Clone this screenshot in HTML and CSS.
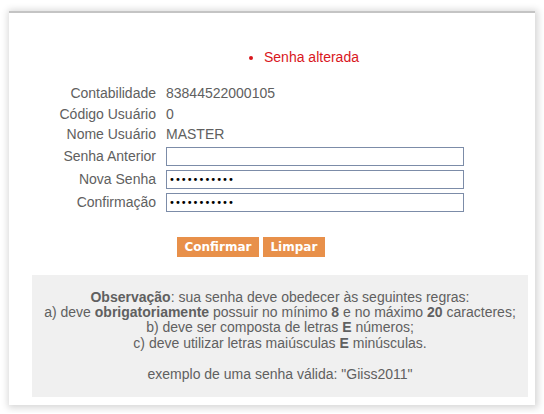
FILE: index.html
```html
<!DOCTYPE html>
<html lang="pt-BR">
<head>
  <meta charset="UTF-8">
  <title>Alterar Senha</title>
  <link rel="stylesheet" href="styles.css">
</head>
<body>
  <div class="panel">
    <ul class="msg">
      <li>Senha alterada</li>
    </ul>
    <div class="form">
      <span class="lbl">Contabilidade</span><span class="val">83844522000105</span>
      <span class="lbl">Código Usuário</span><span class="val">0</span>
      <span class="lbl">Nome Usuário</span><span class="val">MASTER</span>
      <span class="lbl in">Senha Anterior</span><input class="field" type="password" value="">
      <span class="lbl in">Nova Senha</span><input class="field" type="password" value="Giiss201112">
      <span class="lbl in">Confirmação</span><input class="field" type="password" value="Giiss201112">
    </div>
    <div class="buttons">
      <button class="btn">Confirmar</button>
      <button class="btn">Limpar</button>
    </div>
    <div class="obs">
      <b>Observação</b>: sua senha deve obedecer às seguintes regras:<br>
      a) deve <b>obrigatoriamente</b> possuir no mínimo <b>8</b> e no máximo <b>20</b> caracteres;<br>
      b) deve ser composta de letras <b>E</b> números;<br>
      c) deve utilizar letras maiúsculas <b>E</b> minúsculas.<br>
      <br>
      exemplo de uma senha válida: "Giiss2011"
    </div>
  </div>
</body>
</html>
```

FILE: styles.css
```css
body { margin: 0; padding: 11px 9px 8px 9px; background: #fff; font-family: "Liberation Sans", Arial, sans-serif; font-size: 14px; color: #606060; }
.panel { width: 526px; height: 394px; box-sizing: border-box; background: #fff; border-top: 2px solid #c4c4c4; box-shadow: 1px 1px 7px 2px rgba(0,0,0,0.16); }
.msg { margin: 0; padding: 36px 0 0 255px; color: #d9161c; list-style: disc; height: 34px; }
.msg li { line-height: 16px; }
.form { display: grid; grid-template-columns: 147px 298px; column-gap: 10px; align-items: center; }
.lbl { text-align: right; line-height: 20.5px; }
.val { line-height: 20.5px; }
.lbl.in { line-height: 23px; }
.field { width: 298px; height: 19px; box-sizing: border-box; margin: 0; padding: 0 2px; border: 1px solid #7c8ca8; font-size: 10px; font-family: "DejaVu Sans", Verdana, sans-serif; color: #000; }
.buttons { display: flex; gap: 4px; margin: 23px 0 0 168px; }
.btn { height: 20px; padding: 0 7.5px; border: none; background: #e8904a; color: #fff; font-family: "DejaVu Sans", Verdana, sans-serif; font-weight: bold; font-size: 12px; }
.obs { margin: 18px 0 0 23px; width: 496px; height: 122px; box-sizing: border-box; padding: 15px 0 0; background: #f0f0f0; text-align: center; line-height: 15.4px; }
```
